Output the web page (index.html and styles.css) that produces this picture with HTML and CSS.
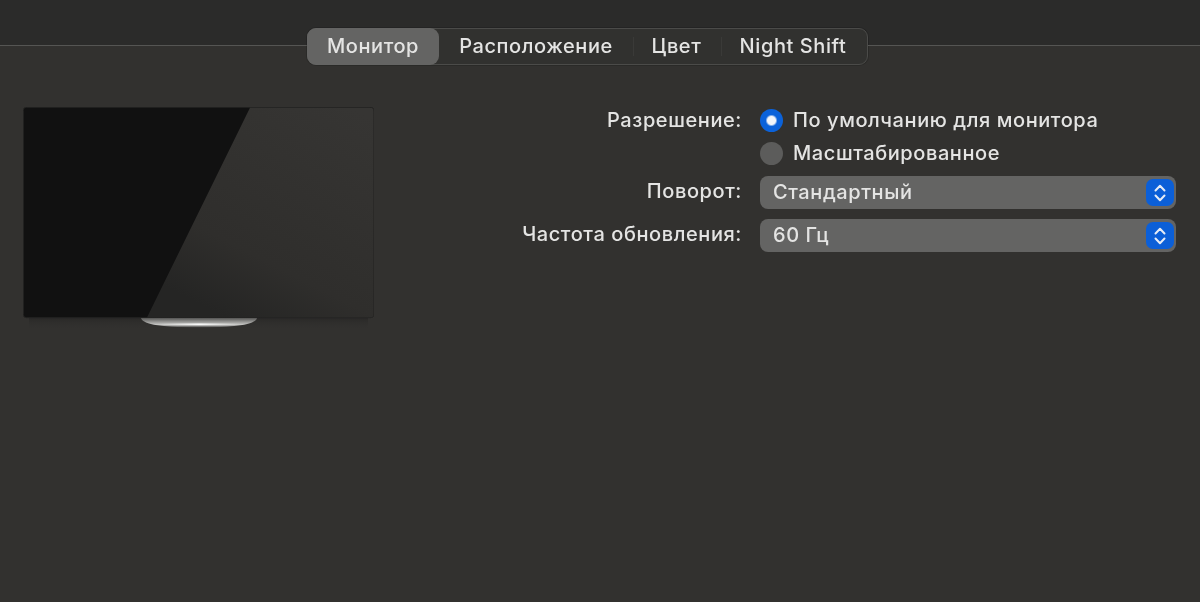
FILE: index.html
```html
<!DOCTYPE html>
<html lang="ru">
<head>
<meta charset="utf-8">
<title>Монитор</title>
<link rel="stylesheet" href="styles.css">
</head>
<body>
<div class="window">
  <header class="tabbar">
    <div class="rule rule-left"></div>
    <nav class="tabs">
      <span class="tab tab-active">Монитор</span>
      <span class="tab tab-place">Расположение</span>
      <span class="sep"></span>
      <span class="tab tab-color">Цвет</span>
      <span class="sep"></span>
      <span class="tab tab-night">Night Shift</span>
    </nav>
    <div class="rule"></div>
  </header>
  <main class="content">
    <div class="display">
      <svg class="display-art" width="351" height="226" viewBox="0 0 351 226" aria-hidden="true">
        <defs>
          <linearGradient id="gloss" x1="0.9" y1="0" x2="0.35" y2="1">
            <stop offset="0" stop-color="#363533"/>
            <stop offset="0.72" stop-color="#2f2e2c"/>
            <stop offset="1" stop-color="#252524"/>
          </linearGradient>
          <linearGradient id="stand" x1="0" y1="0" x2="0" y2="1">
            <stop offset="0" stop-color="#555554"/>
            <stop offset="0.4" stop-color="#959593"/>
            <stop offset="0.72" stop-color="#c8c8c6"/>
            <stop offset="1" stop-color="#3f3f3e"/>
          </linearGradient>
          <linearGradient id="shine" x1="0" y1="0" x2="1" y2="0">
            <stop offset="0" stop-color="#ffffff" stop-opacity="0"/>
            <stop offset="0.5" stop-color="#ffffff" stop-opacity="0.9"/>
            <stop offset="1" stop-color="#ffffff" stop-opacity="0"/>
          </linearGradient>
          <linearGradient id="shade" x1="0" y1="0" x2="0" y2="1">
            <stop offset="0" stop-color="#1c1c1b" stop-opacity="0.4"/>
            <stop offset="1" stop-color="#2f2e2d" stop-opacity="0"/>
          </linearGradient>
        </defs>
        <rect x="6" y="211" width="339" height="11" fill="url(#shade)"/>
        <rect x="0.3" y="0.3" width="350.4" height="210.4" rx="3" fill="#111111" stroke="#262625" stroke-width="0.8"/>
        <path d="M227 0.7H347.5a3 3 0 0 1 3 3V207.5a3 3 0 0 1-3 3H124Z" fill="url(#gloss)"/>
        <path d="M118 211H234C233 216 220 220.5 176 220.5C132 220.5 119 216 118 211Z" fill="url(#stand)"/>
        <rect x="135" y="216.4" width="82" height="1.8" fill="url(#shine)"/>
      </svg>
    </div>
    <form class="settings">
      <div class="label">Разрешение:</div>
      <div class="radio-row"><span class="radio radio-on"></span><span class="value">По умолчанию для монитора</span></div>
      <div class="label"></div>
      <div class="radio-row"><span class="radio"></span><span class="value">Масштабированное</span></div>
      <div class="label">Поворот:</div>
      <div class="select"><span class="value">Стандартный</span>
        <span class="stepper"><svg width="12" height="20" viewBox="0 0 12 20"><path d="M1.5 7.5L6 2.8L10.5 7.5M1.5 12.5L6 17.2L10.5 12.5" fill="none" stroke="#e6ecf6" stroke-width="2" stroke-linecap="round" stroke-linejoin="round"/></svg></span>
      </div>
      <div class="label">Частота обновления:</div>
      <div class="select"><span class="value">60 Гц</span>
        <span class="stepper"><svg width="12" height="20" viewBox="0 0 12 20"><path d="M1.5 7.5L6 2.8L10.5 7.5M1.5 12.5L6 17.2L10.5 12.5" fill="none" stroke="#e6ecf6" stroke-width="2" stroke-linecap="round" stroke-linejoin="round"/></svg></span>
      </div>
    </form>
  </main>
</div>
</body>
</html>
```
FILE: styles.css
```css
* { box-sizing: border-box; }
html, body { margin: 0; height: 100%; }
body {
  background: #32312f;
  color: #e4e4e3;
  font-family: Inter, "Liberation Sans", sans-serif;
  font-size: 20px;
  font-weight: 500;
  letter-spacing: 0.58px;
  overflow: hidden;
}
.window {
  height: 602px;
  background: #32312f;
  display: flex;
  flex-direction: column;
  filter: blur(0.4px);
}
.tabbar {
  background: linear-gradient(#2b2b2a 0, #2b2b2a 45px, #32312f 46px);
  padding-top: 28px;
  display: flex;
  align-items: flex-start;
}
.rule {
  flex: 1;
  height: 1px;
  margin-top: 17px;
  background: #555553;
}
.rule-left { flex: 0 0 307px; }
.tabs {
  flex: 0 0 561px;
  height: 37px;
  display: flex;
  align-items: center;
  border: 1px solid #4b4b49;
  border-radius: 9px;
  background: #31312f;
  box-shadow: 0 0 0 1px rgba(0, 0, 0, 0.14);
}
.tab { text-align: center; white-space: nowrap; padding-bottom: 2px; }
.tab-active {
  align-self: stretch;
  margin: -1px 0 -1px -1px;
  width: 132px;
  background: #646463;
  border-radius: 9px;
  display: flex;
  align-items: center;
  justify-content: center;
}
.tab-place { width: 194px; }
.tab-color { width: 87px; padding-right: 2px; }
.tab-night { flex: 1; padding-right: 3px; }
.sep { width: 1px; height: 19px; background: #3a3a38; }
.content {
  display: flex;
  align-items: flex-start;
  padding: 39px 24px 0 23px;
}
.display { width: 351px; padding-top: 3px; flex: none; }
.display-art { display: block; }
.settings {
  flex: 1;
  display: grid;
  grid-template-columns: 368px 1fr;
  column-gap: 18px;
  align-items: center;
}
.label {
  text-align: right;
  white-space: nowrap;
  padding-bottom: 2px;
}
.value { padding-bottom: 2px; }
.radio-row {
  height: 33px;
  display: flex;
  align-items: center;
  gap: 10px;
}
.radio {
  width: 23px;
  height: 23px;
  border-radius: 50%;
  background: #5c5c5b;
  flex: none;
}
.radio-on {
  background: radial-gradient(circle, #f2f5fa 0 4px, #0b62da 6px);
}
.select {
  height: 33px;
  margin: 6px 0 4px;
  background: #646463;
  border-radius: 8px;
  display: flex;
  align-items: center;
  justify-content: space-between;
  padding: 0 2px 0 13px;
}
.stepper {
  width: 28px;
  height: 27px;
  background: #0b5fd8;
  border-radius: 7px;
  display: flex;
  align-items: center;
  justify-content: center;
}
```
